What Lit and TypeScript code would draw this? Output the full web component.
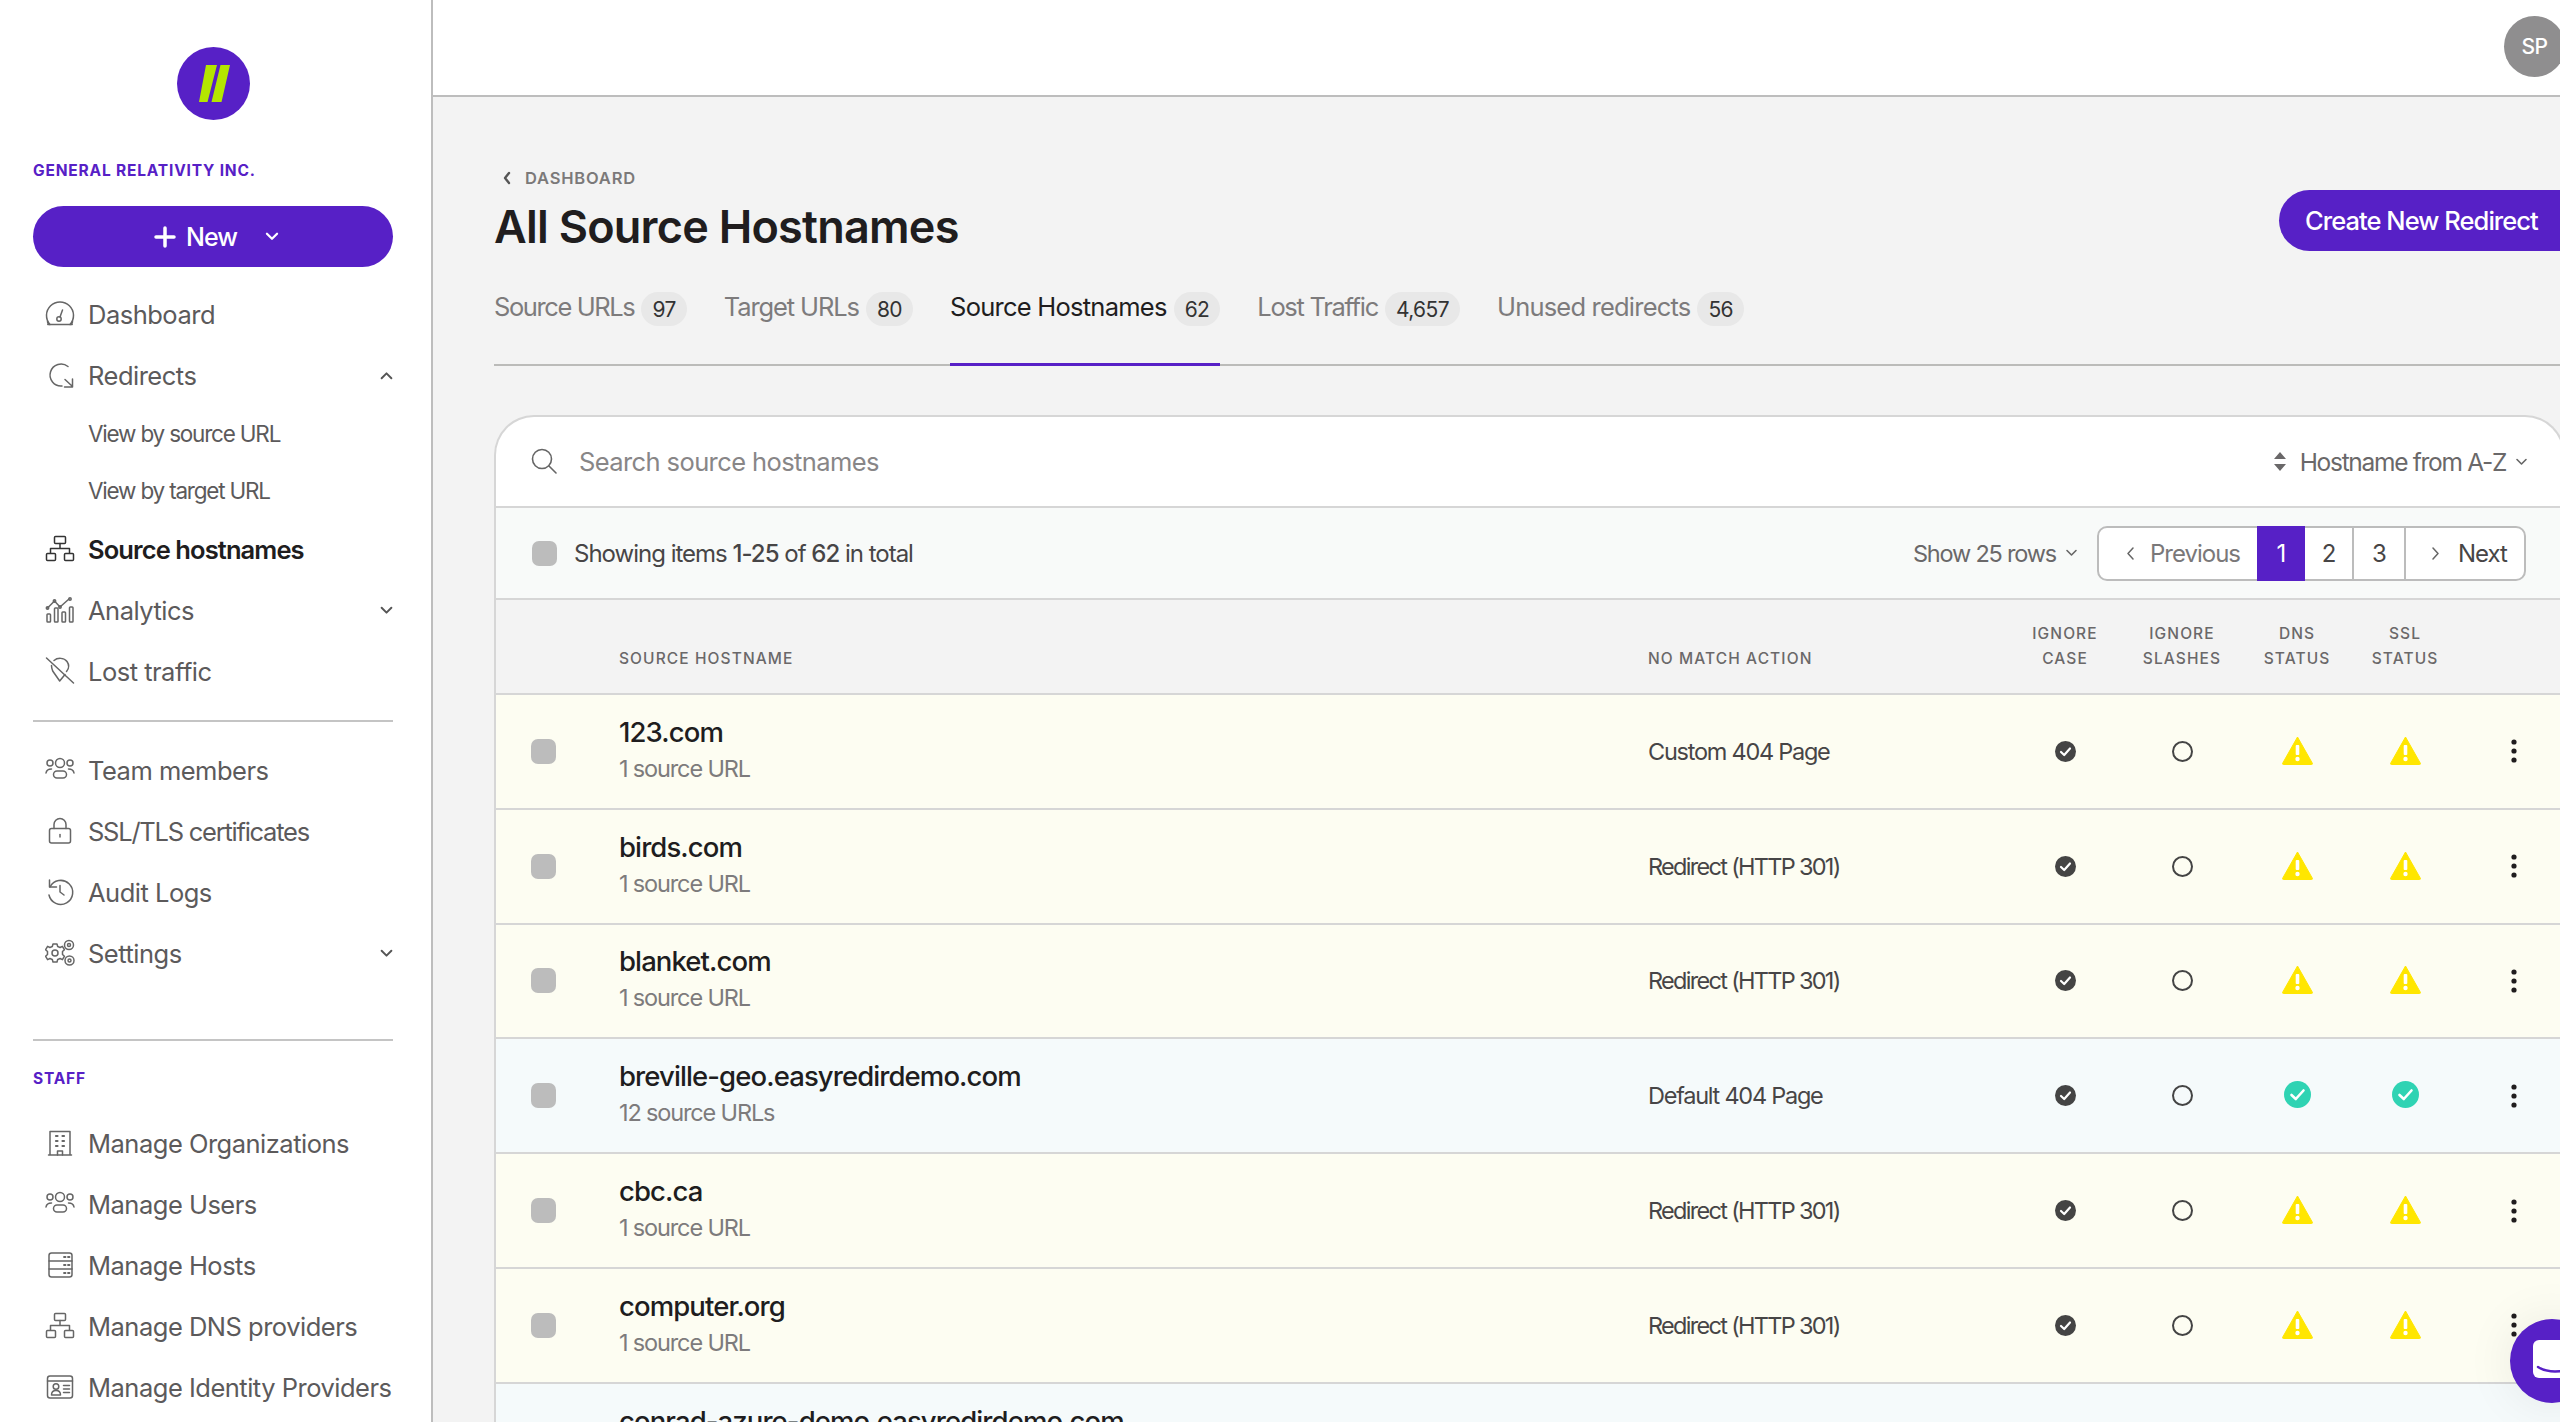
import { LitElement, html, css, svg } from "lit";
import { customElement } from "lit/decorators.js";

const sitemap = svg`<rect x="9.5" y="2.5" width="11" height="7" rx="1"/><path d="M15 9.5v5M5.5 19v-4.500h19V19"/><rect x="1.500" y="19.500" width="9" height="7" rx="1"/><rect x="19.500" y="19.500" width="9" height="7" rx="1"/>`;
const people = svg`<circle cx="15" cy="8" r="4.500"/><circle cx="5" cy="8" r="3"/><circle cx="25" cy="8" r="3"/><rect x="8.500" y="16" width="13" height="7" rx="3.500"/><path d="M1 18c.5-3 2-4 5.500-4M29 18c-.5-3-2-4-5.500-4"/>`;
const ICONS: Record<string, unknown> = {
  gauge: svg`<path d="M5 25.500a13.500 13.500 0 1 1 20 0M2.800 25.500h24.400"/><path d="M2.500 22c0 2.500 .8 3.500 2.500 3.500M27.500 22c0 2.500-.8 3.500-2.500 3.500"/><circle cx="14" cy="20" r="2.200"/><path d="M15 18l2.500-7"/>`,
  redirect: svg`<path d="M23 6.500A11 11 0 1 0 17 26"/><path d="M20 19.500l7 6.500M27.500 19v8h-8"/>`,
  sitemap,
  analytics: svg`<path d="M2.500 13l7-7 5.500 6 9-8"/><circle cx="2.500" cy="13" r="1.200"/><circle cx="9.500" cy="6" r="1.200"/><circle cx="15" cy="12" r="1.200"/><circle cx="25" cy="4" r="1.200"/><rect x="2" y="19" width="3.500" height="8" rx=".8"/><rect x="9.500" y="13" width="3.500" height="14" rx=".8"/><rect x="17" y="17" width="3.500" height="10" rx=".8"/><rect x="24.500" y="12" width="3.500" height="15" rx=".8"/>`,
  lost: svg`<path d="M1.500 2l27 25"/><path d="M9 4.500C12.500 1.500 19 1.500 22 5.500c2.500 3.500 2 7-.5 10M6.500 9.500c0 2 .3 3.500 1.200 5.500l7 10 5.300-6.500"/>`,
  team: people,
  lock: svg`<rect x="4.500" y="12.500" width="21" height="14.500" rx="2"/><path d="M9 12.500V8.500a6 6 0 0 1 12 0v4"/><path d="M15 18.500v2.500"/>`,
  history: svg`<path d="M4.500 3v7h7"/><path d="M5 10a12 12 0 1 1-1 8"/><path d="M15 8.500V15l4 3"/>`,
  gears: svg`<circle cx="10" cy="15" r="3"/><path d="M8 6h4l.7 2.500 2.400 1 2.300-1.200 2 3.400-1.900 1.800v3l1.900 1.800-2 3.400-2.300-1.200-2.400 1L12 24H8l-.7-2.500-2.400-1-2.300 1.200-2-3.400 1.900-1.800v-3L.6 11.700l2-3.400 2.300 1.200 2.400-1z"/><circle cx="24" cy="7" r="4.500"/><circle cx="24" cy="7" r="1.500"/><circle cx="24.500" cy="22.500" r="4.500"/><circle cx="24.500" cy="22.500" r="1.500"/>`,
  building: svg`<path d="M5 27V3.500h20V27M3.500 27h23"/><path d="M12.500 27v-4h5v4"/><path d="M11 8h1.500M17.500 8H19M11 13h1.500M17.500 13H19M11 18h1.500M17.500 18H19" stroke-width="2.200"/>`,
  server: svg`<rect x="4" y="3" width="23" height="24" rx="2.500"/><path d="M4 11h23M4 19h23"/><path d="M19 7h1.500M23 7h1.500M19 15h1.500M23 15h1.500M19 23h1.500M23 23h1.500" stroke-width="1.800"/>`,
  idcard: svg`<rect x="2.500" y="4" width="25" height="22" rx="2.500"/><path d="M2.500 9h25"/><circle cx="11" cy="14.500" r="2.800"/><path d="M6.500 23c0-3 2-4.500 4.500-4.500s4.500 1.500 4.500 4.500zM18.500 13.500h6M18.500 17h6M18.500 20.500h6"/>`,
};

const chevron = (up = false, cls = "chev") => html`<svg class=${cls} viewBox="0 0 12 8"><path d=${up ? "M1.500 6.500 6 2l4.500 4.500" : "M1.500 1.500 6 6l4.500-4.500"}/></svg>`;
const icon = (n: string) => html`<svg class="ico" viewBox="0 0 30 30">${ICONS[n]}</svg>`;

const checkDark = html`<svg class="st-dark" viewBox="0 0 21 21"><circle cx="10.500" cy="10.500" r="10.500" fill="#444"/><path d="M6 11l3.200 3 5.800-6.500" fill="none" stroke="#fff" stroke-width="2.200" stroke-linecap="round" stroke-linejoin="round"/></svg>`;
const ring = html`<svg class="st-dark" viewBox="0 0 21 21"><circle cx="10.500" cy="10.500" r="9.500" fill="none" stroke="#444" stroke-width="2"/></svg>`;
const warn = html`<svg class="st-warn" viewBox="0 0 31 29"><path d="M15.500 1 30.500 27.500a1 1 0 0 1-1 1h-28a1 1 0 0 1-1-1z" fill="#ffe600" stroke="#ffe600" stroke-linejoin="round"/><rect x="13.700" y="9" width="3.600" height="10" rx="1" fill="#fff"/><circle cx="15.500" cy="23" r="2.200" fill="#fff"/></svg>`;
const ok = html`<svg class="st-ok" viewBox="0 0 27 27"><circle cx="13.500" cy="13.500" r="13.500" fill="#2fd3b3"/><path d="M7.500 14l4.300 4 7.700-8.500" fill="none" stroke="#fff" stroke-width="2.600" stroke-linecap="round" stroke-linejoin="round"/></svg>`;

const TABS: [string, string, number][] = [["Source URLs", "97", -1.4], ["Target URLs", "80", -1.1], ["Source Hostnames", "62", -0.75], ["Lost Traffic", "4,657", -1.3], ["Unused redirects", "56", -0.8]];
const ROWS = [
  ["123.com", "1 source URL", "Custom 404 Page", "y"],
  ["birds.com", "1 source URL", "Redirect (HTTP 301)", "y"],
  ["blanket.com", "1 source URL", "Redirect (HTTP 301)", "y"],
  ["breville-geo.easyredirdemo.com", "12 source URLs", "Default 404 Page", "b"],
  ["cbc.ca", "1 source URL", "Redirect (HTTP 301)", "y"],
  ["computer.org", "1 source URL", "Redirect (HTTP 301)", "y"],
  ["conrad-azure-demo.easyredirdemo.com", "1 source URL", "Redirect (HTTP 301)", "b"],
];

@customElement("app-root")
export class AppRoot extends LitElement {
  static styles = css`
    :host { display: flex; width: 2560px; height: 1422px; overflow: hidden; background: #f3f3f3; font-family: Inter, "Liberation Sans", sans-serif; color: #5c5a5b; letter-spacing: -0.5px; }
    * { box-sizing: border-box; }
    svg { flex: none; display: block; }
    aside { width: 433px; flex: none; height: 1422px; background: #fff; border-right: 2px solid #bdbdbd; padding: 47px 0 0 33px; overflow: hidden; }
    .logo { width: 73px; height: 73px; margin-left: 143.500px; display: block; }
    .brand { margin-top: 41px; height: 20px; line-height: 20px; font-size: 15.500px; font-weight: 700; color: #5720c6; letter-spacing: 0.82px; white-space: nowrap; }
    .new { margin-top: 25px; width: 360px; height: 61px; border-radius: 31px; background: #5720c6; color: #fff; display: flex; align-items: center; font-size: 25px; font-weight: 500; letter-spacing: -1px; gap: 10px; padding-left: 121px; }
    .new .plus { width: 22px; height: 22px; }
    .new .chev { width: 14px; height: 9px; margin-left: 18px; stroke: #fff; stroke-width: 2; fill: none; stroke-linecap: round; stroke-linejoin: round; }
    nav { display: flex; flex-direction: column; width: 360px; }
    nav.first { margin-top: 16.500px; }
    .item { height: 61px; display: flex; align-items: center; padding-left: 12px; gap: 13px; font-size: 25.500px; white-space: nowrap; }
    .item.tight span { letter-spacing: -1.25px; }
    .sub { height: 56.500px; display: flex; align-items: center; padding-left: 55px; font-size: 22.500px; letter-spacing: -1.2px; white-space: nowrap; }
    .item.active { color: #201d1e; font-weight: 600; letter-spacing: -0.9px; }
    .ico { width: 30px; height: 30px; fill: none; stroke: #666; stroke-width: 1.500; stroke-linecap: round; stroke-linejoin: round; }
    .active .ico { stroke: #333; }
    .item .chev { width: 13px; height: 9px; margin-left: auto; stroke: #555; stroke-width: 1.800; fill: none; stroke-linecap: round; stroke-linejoin: round; }
    .rule { width: 360px; height: 2px; background: #c4c4c4; }
    .r1 { margin-top: 18px; }
    .n2 { margin-top: 18px; }
    .r2 { margin-top: 55px; }
    .staff { margin-top: 28px; height: 20px; line-height: 20px; font-size: 15.500px; font-weight: 700; color: #5720c6; letter-spacing: 0.8px; }
    .n3 { margin-top: 24px; }

    main { flex: 1; min-width: 0; height: 1422px; display: flex; flex-direction: column; }
    .top { height: 97px; flex: none; background: #fff; border-bottom: 2px solid #bdbdbd; display: flex; justify-content: flex-end; align-items: flex-start; padding-top: 16px; }
    .avatar { width: 61px; height: 61px; border-radius: 50%; background: #8f8e8f; color: #fff; display: flex; align-items: center; justify-content: center; font-size: 21px; font-weight: 500; margin-right: -5px; flex: none; }
    .content { padding-left: 61px; margin-right: -5px; flex: none; }
    .head { display: flex; justify-content: space-between; align-items: flex-end; height: 157px; }
    .crumb { display: flex; align-items: center; height: 20px; gap: 14px; font-size: 16.500px; font-weight: 600; color: #7b7979; letter-spacing: 0.8px; padding-left: 9px; margin-bottom: 12px; }
    .crumb svg { width: 8px; height: 14px; stroke: #555; stroke-width: 2.400; fill: none; stroke-linecap: round; stroke-linejoin: round; }
    h1 { margin: 0; font-size: 45px; line-height: 54px; font-weight: 600; color: #201d1e; letter-spacing: -0.75px; white-space: nowrap; }
    .cta { height: 61px; width: 286px; margin-bottom: 3px; border-radius: 31px 0 0 31px; background: #5720c6; color: #fff; display: flex; align-items: center; padding-left: 26px; font-size: 25.500px; font-weight: 500; letter-spacing: -0.95px; white-space: nowrap; flex: none; }
    .tabs { display: flex; height: 112px; border-bottom: 2px solid #bbbbb9; }
    .tab { display: flex; align-items: flex-start; padding-top: 38px; gap: 7px; margin-right: 37px; height: 112px; font-size: 25.500px; color: #7d7b7c; white-space: nowrap; }
    .tab span.t { line-height: 30px; }
    .tab.on { color: #201d1e; border-bottom: 3px solid #5720c6; }
    .pill { height: 34px; padding: 0 11px; border-radius: 17px; background: #e8e8e8; color: #333; font-size: 21px; line-height: 36px; text-align: center; letter-spacing: -0.6px; }
    .card { margin-top: 49px; background: #fff; border: 2px solid #d6d6d6; border-bottom: 0; border-radius: 40px 40px 0 0; overflow: hidden; }
    .search { height: 91px; border-bottom: 2px solid #d6d6d6; display: flex; align-items: center; padding: 0 35px 0 35px; font-size: 25.500px; letter-spacing: -0.6px; color: #888687; }
    .search > svg:first-child { width: 26px; height: 26px; margin-right: 22px; stroke: #666; fill: none; stroke-width: 1.600; stroke-linecap: round; margin-top: -2px; }
    .sort { margin-left: auto; display: flex; align-items: center; color: #6a6869; font-size: 24.500px; letter-spacing: -1.3px; }
    .sort .arrows { width: 14px; height: 19px; margin-right: 13px; fill: #6a6869; }
    .sort .chev, .rows .chev { width: 13px; height: 8px; margin-left: 9px; stroke: #666; stroke-width: 1.600; fill: none; stroke-linecap: round; stroke-linejoin: round; }
    .toolbar { height: 92px; background: #f8faf9; border-bottom: 2px solid #d6d6d6; display: flex; align-items: center; padding: 0 37px 0 36px; font-size: 24px; letter-spacing: -1px; color: #474546; }
    .box { width: 25px; height: 25px; border-radius: 7px; background: #bcbcbc; flex: none; }
    .toolbar .box { margin-right: 17px; }
    .toolbar b { font-weight: 500; }
    .rows { margin-left: auto; display: flex; align-items: center; color: #6a6869; margin-right: 19px; font-size: 23.500px; letter-spacing: -1.2px; }
    .pager { display: flex; height: 55px; border: 2px solid #bcbcbc; border-radius: 10px; background: #fff; font-size: 24px; color: #474546; letter-spacing: -1px; }
    .pager > div { display: flex; align-items: center; justify-content: center; }
    .pager .pg-prev { width: 158px; color: #7a7879; gap: 16px; padding-left: 28px; justify-content: flex-start; }
    .pager .pg-next { width: 118px; gap: 19px; padding-left: 26px; justify-content: flex-start; }
    .pager .side { width: 7px; height: 13px; stroke: #666; stroke-width: 1.500; fill: none; stroke-linecap: round; stroke-linejoin: round; }
    .pg-on { width: 48px; margin: -2px 0; background: #5720c6; color: #fff; }
    .pg-2 { width: 49px; border-right: 2px solid #bcbcbc; }
    .pg-3 { width: 52px; border-right: 2px solid #bcbcbc; }
    .grid { display: grid; grid-template-columns: 123px 1029px 360px 114px 120px 110px 106px 106px; }
    .thead { height: 95px; background: #f3f3f3; border-bottom: 2px solid #d6d6d6; font-size: 15.500px; font-weight: 500; color: #6a6869; letter-spacing: 1.1px; line-height: 24.500px; padding-bottom: 22px; align-items: end; }
    .thead .c { text-align: center; }
    .row { height: 114.800px; border-bottom: 2px solid #d6d6d6; align-items: center; }
    .row.y { background: #fdfdf2; }
    .row.b { background: #f5fafb; }
    .cellbox { padding-left: 35px; }
    .name { font-size: 27.500px; font-weight: 500; color: #201d1e; line-height: 36px; white-space: nowrap; letter-spacing: -0.9px; margin-top: -3px; }
    .subt { font-size: 23.500px; color: #7d7b7c; line-height: 34px; margin-top: 2px; white-space: nowrap; letter-spacing: -1.15px; }
    .act { font-size: 23.500px; color: #474546; letter-spacing: -1.25px; }
    .act.redir { letter-spacing: -1.7px; }
    .mid { display: flex; justify-content: center; }
    .st-dark { width: 21px; height: 21px; }
    .st-warn { width: 31px; height: 29px; margin-top: -2px; }
    .st-ok { width: 27px; height: 27px; margin-top: -2px; }
    .kebab { width: 6px; height: 24px; margin-left: 6px; }
    .fab { position: absolute; left: 2510px; top: 1319px; width: 84px; height: 84px; border-radius: 50%; background: #5720c6; box-shadow: 0 0 50px rgba(0,0,0,.08); }
    .fab svg { position: absolute; left: 23px; top: 21px; width: 44px; height: 38px; }
  `;

  private nav(items: [string, string, string?][], extra = "") {
    return html`<nav class=${extra}>${items.map(([ic, t, c]) => html`<div class="item ${c === "tight" ? "tight" : ""}">${icon(ic)}<span>${t}</span>${c === "down" ? chevron() : ""}</div>`)}</nav>`;
  }

  render() {
    return html`
      <aside>
        <svg class="logo" viewBox="0 0 73 73"><circle cx="36.500" cy="36.500" r="36.500" fill="#5720c6"/><path d="M29 18h11l-9.500 37H22zM43.500 18h9.500L44.500 55H34.500z" fill="#b4e600"/></svg>
        <div class="brand">GENERAL RELATIVITY INC.</div>
        <div class="new">
          <svg class="plus" viewBox="0 0 22 22"><path d="M11 2v18M2 11h18" stroke="#fff" stroke-width="3.500" stroke-linecap="round"/></svg>
          <span>New</span>${chevron()}
        </div>
        <nav class="first">
          <div class="item">${icon("gauge")}<span>Dashboard</span></div>
          <div class="item">${icon("redirect")}<span>Redirects</span>${chevron(true)}</div>
          <div class="sub">View by source URL</div>
          <div class="sub">View by target URL</div>
          <div class="item active">${icon("sitemap")}<span>Source hostnames</span></div>
          <div class="item">${icon("analytics")}<span>Analytics</span>${chevron()}</div>
          <div class="item">${icon("lost")}<span>Lost traffic</span></div>
        </nav>
        <div class="rule r1"></div>
        ${this.nav([["team", "Team members"], ["lock", "SSL/TLS certificates", "tight"], ["history", "Audit Logs"], ["gears", "Settings", "down"]], "n2")}
        <div class="rule r2"></div>
        <div class="staff">STAFF</div>
        ${this.nav([["building", "Manage Organizations"], ["team", "Manage Users"], ["server", "Manage Hosts"], ["sitemap", "Manage DNS providers"], ["idcard", "Manage Identity Providers"]], "n3")}
      </aside>
      <main>
        <div class="top"><div class="avatar">SP</div></div>
        <div class="content">
          <div class="head">
            <div>
              <div class="crumb"><svg viewBox="0 0 8 14"><path d="M6 2 2 7l4 5"/></svg>DASHBOARD</div>
              <h1>All Source Hostnames</h1>
            </div>
            <div class="cta">Create New Redirect</div>
          </div>
          <div class="tabs">
            ${TABS.map(([t, n, ls]) => html`<div class="tab ${t === "Source Hostnames" ? "on" : ""}"><span class="t" style="letter-spacing:${ls}px">${t}</span><span class="pill">${n}</span></div>`)}
          </div>
          <div class="card">
            <div class="search">
              <svg viewBox="0 0 26 26"><circle cx="11" cy="11" r="9.500"/><path d="M18 18l7 7"/></svg>
              <span>Search source hostnames</span>
              <div class="sort">
                <svg class="arrows" viewBox="0 0 14 19"><path d="M7 0l6 7H1zM7 19l6-7H1z"/></svg>
                <span>Hostname from A-Z</span>${chevron()}
              </div>
            </div>
            <div class="toolbar">
              <div class="box"></div>
              <span>Showing items <b>1-25</b> of <b>62</b> in total</span>
              <div class="rows"><span>Show 25 rows</span>${chevron()}</div>
              <div class="pager">
                <div class="pg-prev"><svg class="side" viewBox="0 0 7 13"><path d="M6 1 1 6.500 6 12"/></svg>Previous</div>
                <div class="pg-on">1</div><div class="pg-2">2</div><div class="pg-3">3</div>
                <div class="pg-next"><svg class="side" viewBox="0 0 7 13"><path d="M1 1l5 5.500L1 12"/></svg>Next</div>
              </div>
            </div>
            <div class="grid thead">
              <div></div><div>SOURCE HOSTNAME</div><div>NO MATCH ACTION</div>
              <div class="c">IGNORE<br />CASE</div><div class="c">IGNORE<br />SLASHES</div><div class="c">DNS<br />STATUS</div><div class="c">SSL<br />STATUS</div><div></div>
            </div>
            ${ROWS.map(([name, sub, action, tone]) => html`
              <div class="grid row ${tone}">
                <div class="cellbox"><div class="box"></div></div>
                <div><div class="name">${name}</div><div class="subt">${sub}</div></div>
                <div class="act ${action.startsWith("Redirect") ? "redir" : ""}">${action}</div>
                <div class="mid">${checkDark}</div>
                <div class="mid">${ring}</div>
                <div class="mid">${tone === "b" ? ok : warn}</div>
                <div class="mid">${tone === "b" ? ok : warn}</div>
                <div class="mid"><svg class="kebab" viewBox="0 0 6 24"><circle cx="3" cy="3" r="2.600" fill="#201d1e"/><circle cx="3" cy="12" r="2.600" fill="#201d1e"/><circle cx="3" cy="21" r="2.600" fill="#201d1e"/></svg></div>
              </div>`)}
          </div>
        </div>
      </main>
      <div class="fab"><svg viewBox="0 0 44 38"><rect width="44" height="38" rx="6" fill="#fff"/><path d="M5 27c9 6 25 6 34 0" fill="none" stroke="#5720c6" stroke-width="2.500" stroke-linecap="round"/></svg></div>
    `;
  }
}
